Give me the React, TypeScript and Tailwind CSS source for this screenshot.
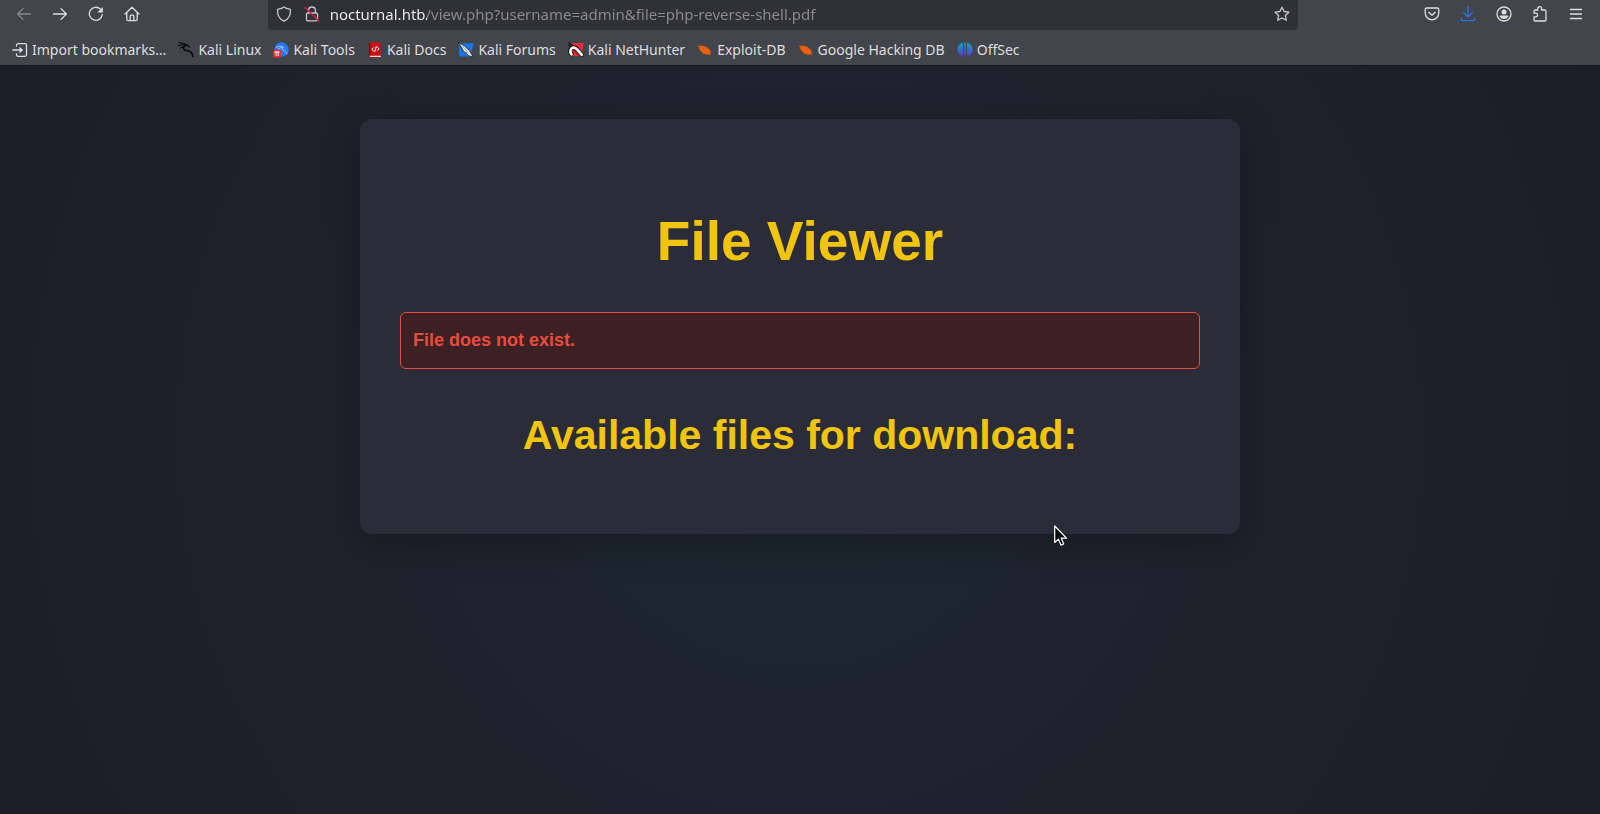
import type { ReactNode } from "react";

type IconProps = { children: ReactNode; className?: string };

function Icon({ children, className = "" }: IconProps) {
  return (
    <svg
      viewBox="0 0 16 16"
      aria-hidden="true"
      fill="none"
      stroke="currentColor"
      strokeWidth="1.3"
      strokeLinecap="round"
      strokeLinejoin="round"
      className={`size-4 shrink-0 ${className}`}
    >
      {children}
    </svg>
  );
}

function ToolButton({ label, className = "", children }: { label: string; className?: string; children: ReactNode }) {
  return (
    <button type="button" aria-label={label} className={`flex size-7 items-center justify-center rounded ${className}`}>
      {children}
    </button>
  );
}

const bug = (
  <Icon>
    <path d="M1.3 3.2 4 5M5 2.2l1 3M9 3.4l.8 2.2M13.5 6.5l-1 1.5M3 9.5l2-.5M5.2 12.5l2-1.5M14.5 10l-2-.5M13 13l-1.4-1.6" stroke="#8a4a24" strokeWidth=".8" />
    <path d="M2.200 5.200C3.200 3.400 5.200 3.400 7.400 4.200c2.700 1 4.800 2.500 5.800 4.600.7 1.600.300 3.200-1.100 3.700-2.400.6-5.300-.6-7.300-2.600C3.100 8.300 1.600 6.700 2.200 5.200Z" fill="#ea5f10" stroke="none" />
    <path d="m1.500 4.500 1.500-.3M12 11.500l1.600.9" stroke="#ea5f10" strokeWidth="1" />
  </Icon>
);

const bookmarks: { label: string; icon: ReactNode }[] = [
  {
    label: "Import bookmarks…",
    icon: (
      <Icon>
        <path d="M4.500 4V3.200c0-.9.600-1.500 1.500-1.500h7c.9 0 1.500.6 1.500 1.500v9.600c0 .9-.6 1.500-1.500 1.500H6c-.9 0-1.500-.6-1.500-1.500V12M.8 8h8" />
        <path d="M7.500 4.800 11.200 8l-3.700 3.200Z" fill="currentColor" stroke="none" />
      </Icon>
    ),
  },
  {
    label: "Kali Linux",
    icon: (
      <Icon>
        <path d="M.7.8c2.500 0 5.300.5 7 1.600M.7 3.600C3 2.600 5.500 2.500 7.500 3.200M2.500 6.200c1.400-1.300 3-2 4.800-2" stroke="#08090b" strokeWidth="1.100" />
        <path d="M7 2.600c1.900 0 3.400.8 4.300 2.400M7.500 3.600C5.600 4.300 5 5.500 5.600 6.800c.8 1.600 2.600 1.700 4.600 2.100 2.700.5 4.400 2.200 4.700 5.800" stroke="#08090b" strokeWidth="1.500" />
      </Icon>
    ),
  },
  {
    label: "Kali Tools",
    icon: (
      <Icon>
        <circle cx="8.500" cy="7.500" r="7.200" fill="#2878f0" stroke="none" />
        <path d="M3.200 5.500C6 3.500 9 3.800 11 5.600M4.500 7.500C6.500 5.500 9 5.400 10 6c-1.400.8-1 1.900.4 2.300 2 .6 3 1.700 3.500 3.500" stroke="#a9cbff" strokeWidth="1" />
        <rect x="0" y="7.500" width="8" height="8.200" rx="2.500" fill="#e52b36" stroke="none" />
        <path d="M1.900 10h4.300M3.100 10v3.600M5.200 10v3.600" stroke="#fff" strokeWidth="1" />
      </Icon>
    ),
  },
  {
    label: "Kali Docs",
    icon: (
      <Icon>
        <path d="M3.500.5h10v15h-10A1.500 1.500 0 0 1 2 14V2A1.500 1.500 0 0 1 3.500.5Z" fill="#cf0f12" stroke="none" />
        <path d="M2 2A1.500 1.500 0 0 1 3.500.5V13A1.500 1.500 0 0 0 2 14Z" fill="#7d0b10" stroke="none" />
        <path d="M3.500 14.300h10" stroke="#e9dada" strokeWidth="1.200" />
        <path d="M6.500 5.700 4.900 7.300l1.600 1.500M10.500 5.300l1.600 1.500-1.600 1.600M9.300 4.500 7.800 9.500" stroke="#fff" strokeWidth="1" />
      </Icon>
    ),
  },
  {
    label: "Kali Forums",
    icon: (
      <Icon>
        <path d="M.8 1.200h15l-3.500 13.300H1.200Z" fill="#1b74e4" stroke="none" />
        <path d="M.5.800 6 3.500l5.500 5.200 3.800 6.500-5-1.800-5-4.600Z" fill="#f4f4f4" stroke="#171a20" strokeWidth=".8" />
        <path d="m4.500 4 4.500 5.500M8 10l3 1.500M2 2.400l3 4.800" stroke="#3b3f46" strokeWidth=".5" />
      </Icon>
    ),
  },
  {
    label: "Kali NetHunter",
    icon: (
      <Icon>
        <path d="M3.500 1h12.300l-2.600 13H1.500l1-6Z" fill="#e62b36" stroke="none" />
        <path d="M.5.800 5 3.500M.4 3.300l2.800.9" stroke="#101216" strokeWidth="1.100" />
        <path d="M3.300 12.300C1 9.800 1.700 5.900 5 5.200c3.300-.6 4.200 2.600 8.800 7.800" stroke="#15171c" strokeWidth="4" />
        <path d="M3.600 12.300C1.400 9.800 2.300 6.200 5.200 5.600c3-.5 4.200 2.700 8.600 7.200" stroke="#fff" strokeWidth="2.600" />
        <path d="M5.400 12.300c-1.600-2.500-.4-4.200 1.100-3.500 1.500.8 1.500 2.500 3.500 4" stroke="#15171c" strokeWidth=".8" />
      </Icon>
    ),
  },
  { label: "Exploit-DB", icon: bug },
  { label: "Google Hacking DB", icon: bug },
  {
    label: "OffSec",
    icon: (
      <Icon>
        <defs>
          <linearGradient id="offsec" gradientUnits="userSpaceOnUse" x1="0" y1="0" x2="0" y2="16">
            <stop offset="0" stopColor="#12a3b8" />
            <stop offset=".5" stopColor="#2f6fd0" />
            <stop offset="1" stopColor="#6a25c9" />
          </linearGradient>
        </defs>
        <g fill="url(#offsec)" stroke="none">
          <path d="M6 .5C2.500 1.500.300 4.500.300 7.800c0 3 1.800 5.400 4.500 6.200.7-.6 1.200-1.500 1.200-2.500Z" />
          <path d="M10 .5c3.500 1 5.700 4 5.700 7.300 0 3-1.800 5.400-4.500 6.200-.7-.6-1.200-1.500-1.200-2.500Z" />
          <path d="M7.200.5h1.600v15.300H7.200Z" />
        </g>
      </Icon>
    ),
  },
];

function Toolbar() {
  return (
    <nav aria-label="Navigation" className="flex h-[30px] items-center">
      <div className="flex flex-[267] items-center gap-2 pb-0.5 pl-[10px]">
        <ToolButton label="Back" className="text-[#87888d]">
          <Icon><path d="M14.500 8H1.600M7 2.600 1.600 8 7 13.400" /></Icon>
        </ToolButton>
        <ToolButton label="Forward">
          <Icon><path d="M1.500 8h12.900M9 2.600 14.400 8 9 13.400" /></Icon>
        </ToolButton>
        <ToolButton label="Reload">
          <Icon>
            <path d="M14.300 8.700A6.500 6.500 0 1 1 12.300 3" />
            <path d="M14.900.900v5.500H9.400Z" fill="currentColor" stroke="none" />
          </Icon>
        </ToolButton>
        <ToolButton label="Home">
          <Icon>
            <path d="M1 8 8 1.300 15 8M2.800 6.800v6.400c0 1 .6 1.500 1.500 1.500h7.400c.9 0 1.500-.5 1.500-1.500V6.800" />
            <path d="M6.200 14.500V10c0-.6.300-.9.800-.9h2c.5 0 .8.300.8.900v4.500" />
          </Icon>
        </ToolButton>
      </div>

      <div className="flex h-[30px] w-full max-w-[1030px] items-center rounded-b bg-[#303136] px-2 pb-0.5 text-[#c9c9cc]">
        <Icon><path d="M8 .9c1.600 1.200 3.700 1.900 5.700 2.200.5.100.8.4.8 1C14.600 9.200 12 13.600 8 15.200 4 13.600 1.400 9.200 1.500 4.100c0-.6.300-.9.800-1C4.300 2.800 6.400 2.100 8 .9Z" /></Icon>
        <Icon className="ml-3">
          <path d="M4.600 6.800V4.400a3.400 3.400 0 0 1 6.800 0v2.400M3.800 7h8.400c.8 0 1.300.5 1.300 1.300v5.200c0 .8-.5 1.300-1.300 1.300H3.800c-.8 0-1.300-.5-1.300-1.300V8.300C2.500 7.500 3 7 3.800 7Z" />
          <path d="m1.200 1.600 13.600 13.400" stroke="#e2184a" strokeWidth="1.400" />
        </Icon>
        <input
          type="text"
          aria-label="Address"
          spellCheck={false}
          defaultValue="nocturnal.htb/view.php?username=admin&file=php-reverse-shell.pdf"
          className="ml-[10px] h-7 min-w-0 flex-1 bg-[linear-gradient(to_right,#f2f2f4_97px,#8c8c90_97px)] bg-clip-text text-[15px] text-transparent outline-none"
        />
        <button type="button" aria-label="Bookmark this page">
          <Icon><path d="m8 1.200 2.100 4.300 4.800.7-3.500 3.300.9 4.800L8 12l-4.300 2.300.9-4.800L1.100 6.200l4.800-.7Z" /></Icon>
        </button>
      </div>

      <div className="flex flex-[303] items-center justify-end gap-2 pr-[10px] pb-0.5">
        <ToolButton label="Save to Pocket">
          <Icon>
            <path d="M2.700 2h10.600c.9 0 1.500.6 1.500 1.500V7a6.800 6.800 0 0 1-13.600 0V3.500C1.200 2.600 1.800 2 2.700 2Z" />
            <path d="M4.800 6.200 8 9.300l3.200-3.100" />
          </Icon>
        </ToolButton>
        <ToolButton label="Downloads" className="text-[#2a72ea]">
          <Icon><path d="M8 .7v10.100M3.600 6.600 8 11l4.400-4.400M1.300 12.200v1c0 .9.600 1.500 1.500 1.500h10.400c.9 0 1.500-.6 1.500-1.500v-1" /></Icon>
        </ToolButton>
        <ToolButton label="Account">
          <Icon>
            <circle cx="8" cy="8" r="7" />
            <circle cx="8" cy="5.900" r="2.500" fill="currentColor" stroke="none" />
            <path d="M4.300 9.400h7.400c.5 0 .8.500.6 1A4.800 4.800 0 0 1 8 13a4.800 4.800 0 0 1-4.300-2.600c-.2-.5.100-1 .6-1Z" fill="currentColor" stroke="none" />
          </Icon>
        </ToolButton>
        <ToolButton label="Extensions">
          <Icon><path d="M5.800 4V2.600a1.900 1.900 0 0 1 3.800 0V4h3.200c.8 0 1.200.4 1.200 1.200v8.600c0 .8-.4 1.200-1.200 1.200H3.200c-.8 0-1.200-.4-1.200-1.200v-3h1.800a1.800 1.800 0 0 0 0-3.600H2v-2C2 4.400 2.400 4 3.200 4Z" /></Icon>
        </ToolButton>
        <ToolButton label="Menu">
          <Icon><path d="M2.500 3.500h11M2.500 8h11M2.500 12.500h11" /></Icon>
        </ToolButton>
      </div>
    </nav>
  );
}

export default function App() {
  return (
    <div className="flex min-h-screen flex-col font-['Liberation_Sans',Arial,sans-serif]">
      <header className="border-b border-[#15171d] bg-[#43454c] font-['Noto_Sans',sans-serif] text-[#dededf]">
        <Toolbar />
        <nav aria-label="Bookmarks" className="flex h-[35px] items-center gap-3 overflow-hidden px-3 pt-2 pb-[3px] text-[14px] leading-5">
          {bookmarks.map(({ label, icon }) => (
            <a key={label} href="#" className="flex items-center gap-1 whitespace-nowrap">
              {icon}
              {label}
            </a>
          ))}
        </nav>
      </header>

      <main className="relative flex-1 bg-[radial-gradient(circle,#1e2730,#1c1e27)] px-6 pt-[53px]">
        <section className="mx-auto max-w-[880px] rounded-xl bg-[#2a2c37] px-10 pt-[92px] pb-[74px] shadow-[0_10px_38px_rgba(0,0,0,0.25)]">
          <h1 className="text-center text-[55px] leading-[60px] font-bold text-[#f1c40f]">File Viewer</h1>
          <p role="alert" className="mt-[41px] rounded-md border border-[#e74c3c] bg-[#3c2024] px-3 py-[14px] text-[18px] leading-[27px] font-bold text-[#e74c3c]">
            File does not exist.
          </p>
          <h2 className="mt-[41px] text-center text-[41px] leading-[50px] font-bold text-[#f1c40f]">
            Available files for download:
          </h2>
        </section>
        <svg viewBox="0 0 14 22" aria-hidden="true" className="absolute top-[459px] left-1/2 ml-[254px] h-[22px] w-[14px]">
          <path d="M.7 1v16.500l3.700-3.400 2.500 6 2.800-1.200-2.500-5.800h5.300Z" fill="#08090b" stroke="#fff" strokeWidth="1.200" strokeLinejoin="round" />
        </svg>
      </main>
    </div>
  );
}
